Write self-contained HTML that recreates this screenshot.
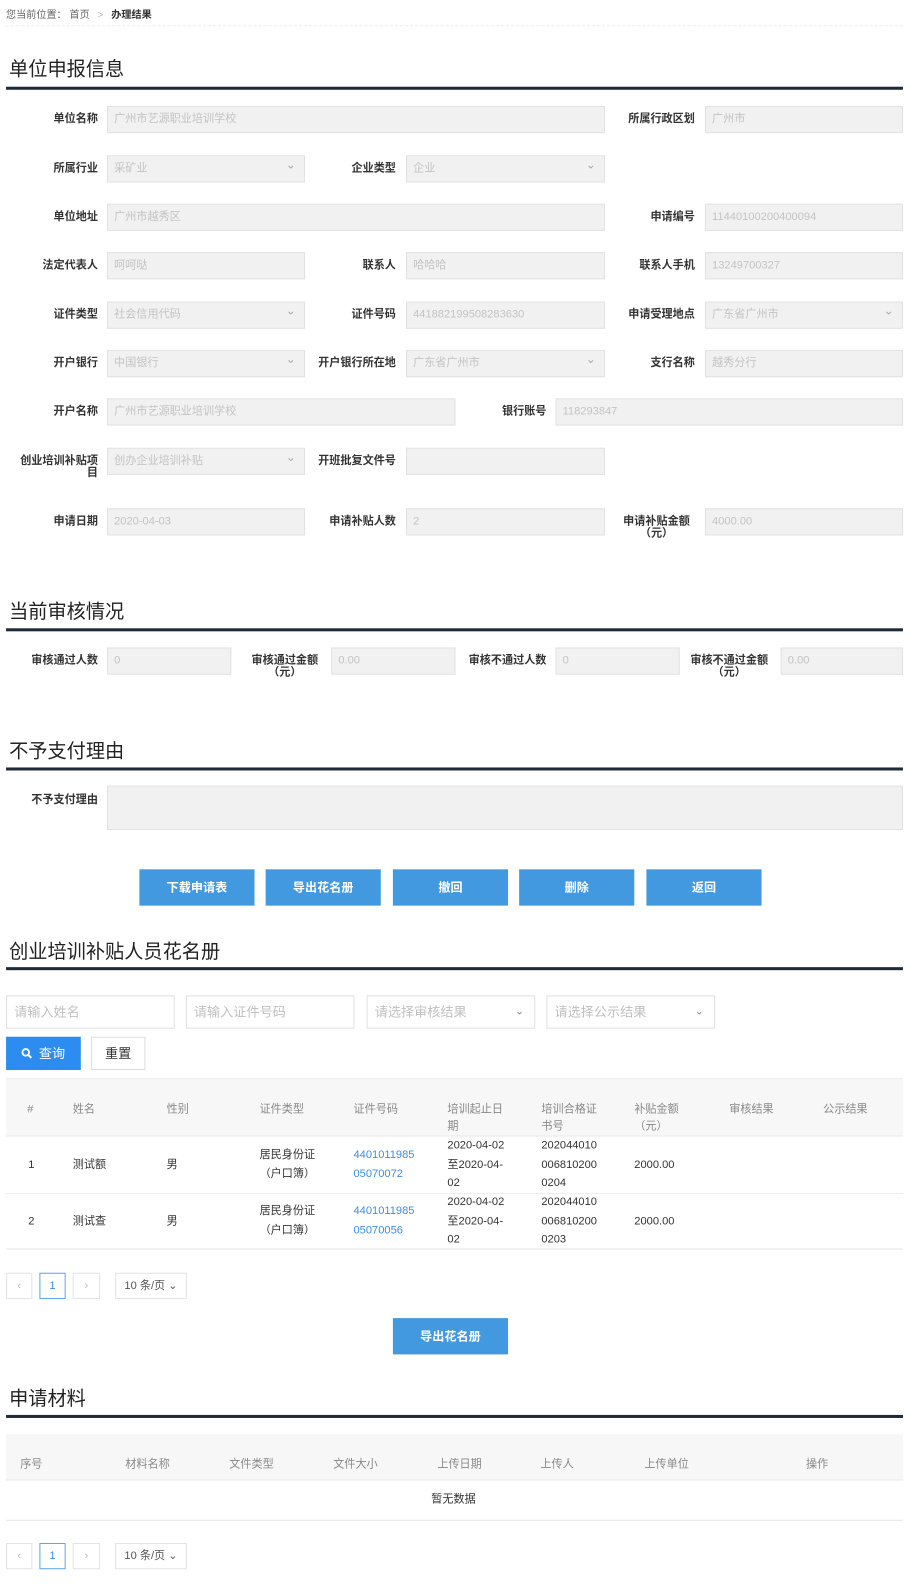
<!DOCTYPE html>
<html><head><meta charset="utf-8">
<style>
*{margin:0;padding:0;box-sizing:border-box}
body{width:906px;height:1581px;position:relative;background:#fff;font-family:"Liberation Sans","Noto Sans CJK SC",sans-serif;color:#333;overflow:hidden}
#w{position:absolute;left:0;top:0;width:906px;height:1581px;transform:scale(1.01,1.0085);transform-origin:0 0}
.a{position:absolute}
.l{position:absolute;font-size:11px;font-weight:bold;color:#333;text-align:right;line-height:12px}
.i{position:absolute;height:27px;background:#f1f1f1;border:1px solid #e2e2e2;font-size:11px;color:#c3c3c3;padding-left:6px;line-height:25px}
.s::after{content:"⌄";position:absolute;right:8px;top:-4px;color:#aaa;font-size:12px}
.h{position:absolute;left:9px;font-size:19px;color:#222}
.bar{position:absolute;left:6px;width:888px;height:3px;background:#1e2a36}
.btn{position:absolute;height:36px;background:#4299df;color:#fff;font-size:12px;font-weight:bold;text-align:center;line-height:36px}
.si{position:absolute;height:33px;border:1px solid #e0e0e0;font-size:13px;color:#c0c0c0;padding-left:7px;line-height:31px;top:987px}
.th{position:absolute;font-size:11px;color:#888;line-height:17px}
.td{position:absolute;font-size:11px;color:#333;line-height:18.5px}
.pg{position:absolute;height:26px;border:1px solid #e3e3e3;font-size:11px;color:#bbb;text-align:center;line-height:24px}
</style></head><body><div id="w">
<div class="a" style="left:6px;top:6px;font-size:10px;color:#666">您当前位置： 首页 <span style="color:#bbb;margin:0 5px">&gt;</span> <b style="color:#333">办理结果</b></div>
<div class="a" style="left:6px;top:25px;width:888px;border-top:1px dashed #eee"></div>

<div class="h" style="top:54px">单位申报信息</div>
<div class="bar" style="top:86px"></div>

<div class="l" style="left:0;width:97px;top:112px">单位名称</div>
<div class="i" style="left:106px;width:493px;top:105px">广州市艺源职业培训学校</div>
<div class="l" style="left:600px;width:88px;top:112px">所属行政区划</div>
<div class="i" style="left:698px;width:196px;top:105px">广州市</div>

<div class="l" style="left:0;width:97px;top:161px">所属行业</div>
<div class="i s" style="left:106px;width:196px;top:154px">采矿业</div>
<div class="l" style="left:300px;width:92px;top:161px">企业类型</div>
<div class="i s" style="left:402px;width:197px;top:154px">企业</div>

<div class="l" style="left:0;width:97px;top:209px">单位地址</div>
<div class="i" style="left:106px;width:493px;top:202px">广州市越秀区</div>
<div class="l" style="left:600px;width:88px;top:209px">申请编号</div>
<div class="i" style="left:698px;width:196px;top:202px">11440100200400094</div>

<div class="l" style="left:0;width:97px;top:257px">法定代表人</div>
<div class="i" style="left:106px;width:196px;top:250px">呵呵哒</div>
<div class="l" style="left:300px;width:92px;top:257px">联系人</div>
<div class="i" style="left:402px;width:197px;top:250px">哈哈哈</div>
<div class="l" style="left:600px;width:88px;top:257px">联系人手机</div>
<div class="i" style="left:698px;width:196px;top:250px">13249700327</div>

<div class="l" style="left:0;width:97px;top:306px">证件类型</div>
<div class="i s" style="left:106px;width:196px;top:299px">社会信用代码</div>
<div class="l" style="left:300px;width:92px;top:306px">证件号码</div>
<div class="i" style="left:402px;width:197px;top:299px">441882199508283630</div>
<div class="l" style="left:600px;width:88px;top:306px">申请受理地点</div>
<div class="i s" style="left:698px;width:196px;top:299px">广东省广州市</div>

<div class="l" style="left:0;width:97px;top:354px">开户银行</div>
<div class="i s" style="left:106px;width:196px;top:347px">中国银行</div>
<div class="l" style="left:300px;width:92px;top:354px">开户银行所在地</div>
<div class="i s" style="left:402px;width:197px;top:347px">广东省广州市</div>
<div class="l" style="left:600px;width:88px;top:354px">支行名称</div>
<div class="i" style="left:698px;width:196px;top:347px">越秀分行</div>

<div class="l" style="left:0;width:97px;top:402px">开户名称</div>
<div class="i" style="left:106px;width:345px;top:395px">广州市艺源职业培训学校</div>
<div class="l" style="left:450px;width:91px;top:402px">银行账号</div>
<div class="i" style="left:550px;width:344px;top:395px">118293847</div>

<div class="l" style="left:0;width:97px;top:451px">创业培训补贴项<br>目</div>
<div class="i s" style="left:106px;width:196px;top:444px">创办企业培训补贴</div>
<div class="l" style="left:300px;width:92px;top:451px">开班批复文件号</div>
<div class="i" style="left:402px;width:197px;top:444px"></div>

<div class="l" style="left:0;width:97px;top:511px">申请日期</div>
<div class="i" style="left:106px;width:196px;top:504px">2020-04-03</div>
<div class="l" style="left:300px;width:92px;top:511px">申请补贴人数</div>
<div class="i" style="left:402px;width:197px;top:504px">2</div>
<div class="l" style="left:608px;width:84px;top:511px;text-align:center;white-space:nowrap">申请补贴金额<br>（元）</div>
<div class="i" style="left:698px;width:196px;top:504px">4000.00</div>

<div class="h" style="top:592px">当前审核情况</div>
<div class="bar" style="top:623px"></div>
<div class="l" style="left:0;width:97px;top:649px">审核通过人数</div>
<div class="i" style="left:106px;width:123px;top:642px">0</div>
<div class="l" style="left:240px;width:84px;top:649px;text-align:center;white-space:nowrap">审核通过金额<br>（元）</div>
<div class="i" style="left:328px;width:123px;top:642px">0.00</div>
<div class="l" style="left:450px;width:91px;top:649px">审核不通过人数</div>
<div class="i" style="left:550px;width:123px;top:642px">0</div>
<div class="l" style="left:676px;width:92px;top:649px;text-align:center;white-space:nowrap">审核不通过金额<br>（元）</div>
<div class="i" style="left:773px;width:121px;top:642px">0.00</div>

<div class="h" style="top:730px">不予支付理由</div>
<div class="bar" style="top:761px"></div>
<div class="l" style="left:0;width:97px;top:787px">不予支付理由</div>
<div class="i" style="left:106px;width:788px;top:779px;height:44px"></div>

<div class="btn" style="left:138px;width:114px;top:862px">下载申请表</div>
<div class="btn" style="left:263px;width:114px;top:862px">导出花名册</div>
<div class="btn" style="left:389px;width:114px;top:862px">撤回</div>
<div class="btn" style="left:514px;width:114px;top:862px">删除</div>
<div class="btn" style="left:640px;width:114px;top:862px">返回</div>

<div class="h" style="top:929px">创业培训补贴人员花名册</div>
<div class="bar" style="top:959px"></div>
<div class="si" style="left:6px;width:167px">请输入姓名</div>
<div class="si" style="left:184px;width:167px">请输入证件号码</div>
<div class="si" style="left:363px;width:167px">请选择审核结果<span style="position:absolute;right:10px;color:#888;font-size:11px">⌄</span></div>
<div class="si" style="left:541px;width:167px">请选择公示结果<span style="position:absolute;right:10px;color:#888;font-size:11px">⌄</span></div>
<div class="a" style="left:6px;top:1028px;width:74px;height:33px;background:#2d8cf0;color:#fff;font-size:13px;line-height:33px;text-align:center"><svg width="11" height="11" viewBox="0 0 11 11" style="vertical-align:-1px;margin-right:6px"><circle cx="4.5" cy="4.5" r="3.3" fill="none" stroke="#fff" stroke-width="1.8"/><path d="M7 7l3 3" stroke="#fff" stroke-width="2"/></svg>查询</div>
<div class="a" style="left:90px;top:1028px;width:54px;height:33px;border:1px solid #ddd;font-size:13px;line-height:31px;text-align:center;color:#333">重置</div>

<div class="a" style="left:6px;top:1069px;width:888px;height:58px;background:#f7f7f7;border-top:1px solid #eee;border-bottom:1px solid #e8e8e8"></div>
<div class="th" style="left:27px;top:1092px">#</div>
<div class="th" style="left:72px;top:1092px">姓名</div>
<div class="th" style="left:165px;top:1092px">性别</div>
<div class="th" style="left:257px;top:1092px">证件类型</div>
<div class="th" style="left:350px;top:1092px">证件号码</div>
<div class="th" style="left:443px;top:1092px">培训起止日<br>期</div>
<div class="th" style="left:536px;top:1092px">培训合格证<br>书号</div>
<div class="th" style="left:628px;top:1092px">补贴金额<br>（元）</div>
<div class="th" style="left:722px;top:1092px">审核结果</div>
<div class="th" style="left:815px;top:1092px">公示结果</div>

<div class="td" style="left:28px;top:1146px">1</div>
<div class="td" style="left:72px;top:1146px">测试额</div>
<div class="td" style="left:165px;top:1146px">男</div>
<div class="td" style="left:257px;top:1136px">居民身份证<br>（户口簿）</div>
<div class="td" style="left:350px;top:1136px;color:#3b8de0">4401011985<br>05070072</div>
<div class="td" style="left:443px;top:1127px">2020-04-02<br>至2020-04-<br>02</div>
<div class="td" style="left:536px;top:1127px">202044010<br>006810200<br>0204</div>
<div class="td" style="left:628px;top:1146px">2000.00</div>
<div class="a" style="left:6px;top:1183px;width:888px;border-top:1px solid #eee"></div>
<div class="td" style="left:28px;top:1202px">2</div>
<div class="td" style="left:72px;top:1202px">测试查</div>
<div class="td" style="left:165px;top:1202px">男</div>
<div class="td" style="left:257px;top:1192px">居民身份证<br>（户口簿）</div>
<div class="td" style="left:350px;top:1192px;color:#3b8de0">4401011985<br>05070056</div>
<div class="td" style="left:443px;top:1183px">2020-04-02<br>至2020-04-<br>02</div>
<div class="td" style="left:536px;top:1183px">202044010<br>006810200<br>0203</div>
<div class="td" style="left:628px;top:1202px">2000.00</div>
<div class="a" style="left:6px;top:1238px;width:888px;border-top:1px solid #e6e6e6"></div>

<div class="pg" style="left:6px;top:1262px;width:26px">‹</div>
<div class="pg" style="left:39px;top:1262px;width:26px;border-color:#5ba3f3;color:#3b8de0">1</div>
<div class="pg" style="left:72px;top:1262px;width:27px">›</div>
<div class="pg" style="left:114px;top:1262px;width:71px;color:#555">10 条/页 ⌄</div>

<div class="btn" style="left:389px;width:114px;top:1307px">导出花名册</div>

<div class="h" style="top:1372px">申请材料</div>
<div class="bar" style="top:1403px"></div>
<div class="a" style="left:6px;top:1422px;width:888px;height:46px;background:#f7f7f7;border-bottom:1px solid #e8e8e8"></div>
<div class="th" style="left:20px;top:1444px">序号</div>
<div class="th" style="left:124px;top:1444px">材料名称</div>
<div class="th" style="left:227px;top:1444px">文件类型</div>
<div class="th" style="left:330px;top:1444px">文件大小</div>
<div class="th" style="left:433px;top:1444px">上传日期</div>
<div class="th" style="left:535px;top:1444px">上传人</div>
<div class="th" style="left:638px;top:1444px">上传单位</div>
<div class="th" style="left:798px;top:1444px">操作</div>
<div class="td" style="left:427px;top:1478px">暂无数据</div>
<div class="a" style="left:6px;top:1507px;width:888px;border-top:1px solid #e6e6e6"></div>

<div class="pg" style="left:6px;top:1530px;width:26px">‹</div>
<div class="pg" style="left:39px;top:1530px;width:26px;border-color:#5ba3f3;color:#3b8de0">1</div>
<div class="pg" style="left:72px;top:1530px;width:27px">›</div>
<div class="pg" style="left:114px;top:1530px;width:71px;color:#555">10 条/页 ⌄</div>
</div></body></html>
